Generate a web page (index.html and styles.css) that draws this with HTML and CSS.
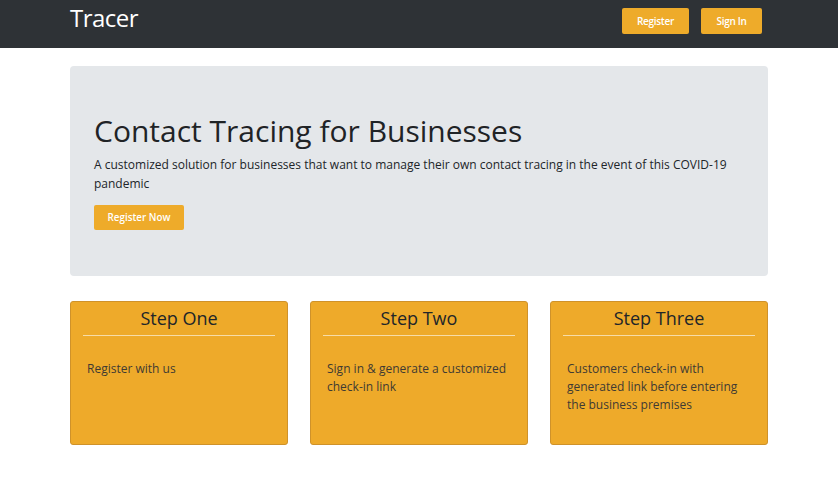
FILE: index.html
```html
<!DOCTYPE html>
<html>
<head>
<meta charset="utf-8">
<link rel="stylesheet" href="styles.css">
</head>
<body>
<nav class="navbar">
  <div class="container nav-inner">
    <div class="brand">Tracer</div>
    <div class="nav-buttons">
      <a class="btn btn-nav">Register</a>
      <a class="btn btn-nav btn-signin">Sign In</a>
    </div>
  </div>
</nav>
<main class="container">
  <section class="jumbotron">
    <h1>Contact Tracing for Businesses</h1>
    <p>A customized solution for businesses that want to manage their own contact tracing in the event of this COVID-19 pandemic</p>
    <a class="btn btn-cta">Register Now</a>
  </section>
  <section class="steps">
    <div class="card">
      <h2>Step One</h2>
      <p>Register with us</p>
    </div>
    <div class="card">
      <h2>Step Two</h2>
      <p>Sign in &amp; generate a customized check-in link</p>
    </div>
    <div class="card">
      <h2>Step Three</h2>
      <p>Customers check-in with generated link before entering the business premises</p>
    </div>
  </section>
</main>
</body>
</html>
```
FILE: styles.css
```css
* { box-sizing: border-box; }
body {
  margin: 0;
  font-family: "Open Sans", "Liberation Sans", sans-serif;
  background: #ffffff;
  color: #212529;
}
.container {
  width: 698px;
  margin: 0 auto;
}
.navbar {
  background: #2e3236;
  height: 48px;
}
.nav-inner {
  display: flex;
  justify-content: space-between;
  align-items: flex-start;
  height: 48px;
}
.brand {
  color: #ffffff;
  font-size: 24px;
  line-height: 36px;
  letter-spacing: -0.5px;
}
.nav-buttons {
  display: flex;
  gap: 12px;
  margin-top: 8px;
  margin-right: 6px;
}
.btn {
  display: inline-block;
  background: #eeab2a;
  color: #ffffff;
  border-radius: 2px;
  text-align: center;
}
.btn-nav {
  height: 26px;
  width: 67px;
  font-size: 10px;
  line-height: 26px;
  font-weight: 600;
  letter-spacing: -0.3px;
}
.btn-signin { width: 61px; }
.jumbotron {
  margin-top: 18px;
  background: #e4e7ea;
  border-radius: 4px;
  height: 210px;
  padding: 45px 24px 0;
}
.jumbotron h1 {
  margin: 0;
  font-size: 30px;
  font-weight: 400;
  line-height: 40px;
  color: #1f2326;
}
.jumbotron p {
  margin: 4px 0 0;
  font-size: 12px;
  line-height: 19px;
  color: #212529;
}
.btn-cta {
  margin-top: 12px;
  width: 90px;
  height: 25px;
  line-height: 25px;
  font-size: 9.8px;
  font-weight: 600;
}
.steps {
  margin-top: 25px;
  display: grid;
  grid-template-columns: repeat(3, 218px);
  column-gap: 22px;
}
.card {
  height: 144px;
  background: #eeaa2a;
  border: 1px solid #cf922a;
  border-radius: 3px;
  padding: 0 12px;
}
.card h2 {
  margin: 0;
  padding-top: 3px;
  height: 34px;
  font-size: 18px;
  font-weight: 400;
  line-height: 26px;
  text-align: center;
  color: #212529;
  border-bottom: 1px solid #f6dca8;
}
.card p {
  margin: 24px 0 0;
  padding-left: 4px;
  font-size: 12px;
  line-height: 18px;
  color: #3f3a33;
}
```
